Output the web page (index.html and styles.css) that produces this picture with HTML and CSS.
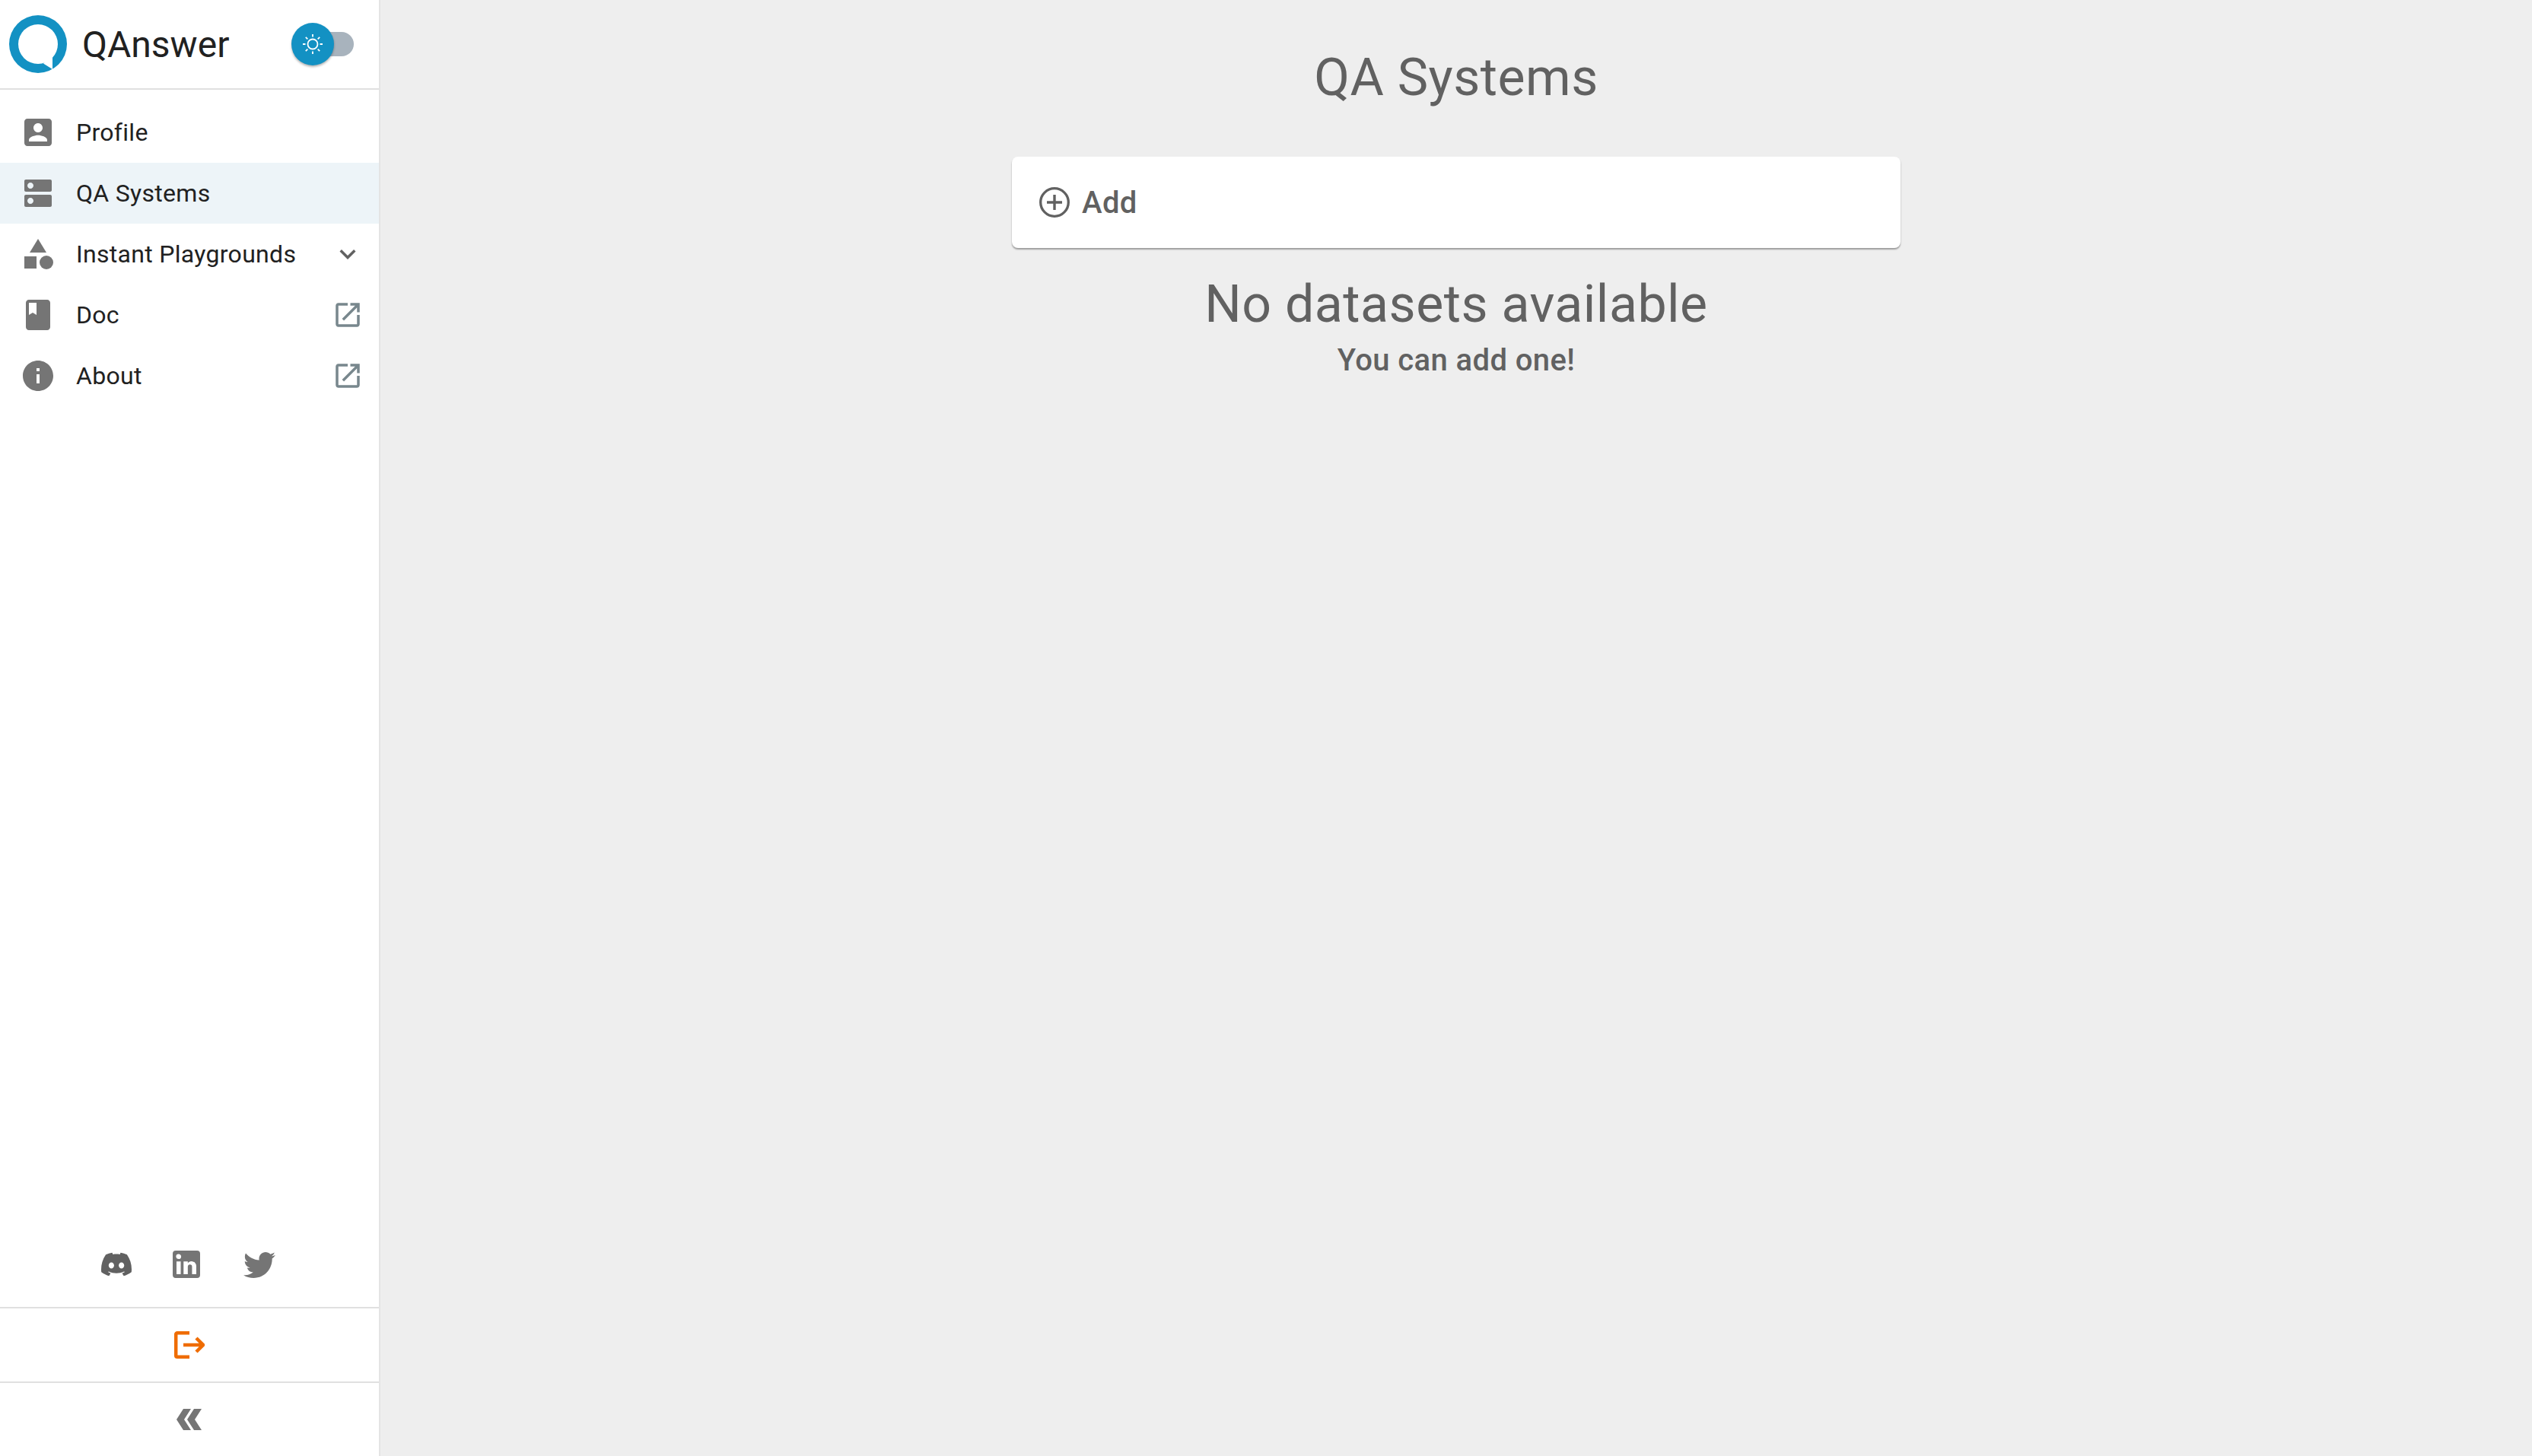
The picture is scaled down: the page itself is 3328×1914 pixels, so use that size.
FILE: index.html
```html
<!DOCTYPE html>
<html>
  <head>
    <title>QAnswer</title>
    <link rel="stylesheet" href="styles.css">
  </head>
  <body>
    <div class="app">
      <aside class="sidebar">
        <div class="brand">
          <svg class="logo" viewBox="0 0 76 76">
            <circle cx="38" cy="38" r="38" fill="#1391c3"/>
            <circle cx="38" cy="38" r="26" fill="#fff"/>
            <polygon points="57,52 57,71 45,63.500" fill="#fff"/>
          </svg>
          <span class="brand-name">QAnswer</span>
          <div class="theme-switch">
            <div class="switch-track"></div>
            <div class="switch-thumb">
              <svg viewBox="0 0 28 28" class="sun">
                <circle cx="14" cy="14" r="6.500" fill="none" stroke="#fff" stroke-width="1.800"/>
                <path d="M14 1v3.500M14 23.500V27M1 14h3.500M23.500 14H27M4.800 4.800l2.500 2.500M20.700 20.700l2.500 2.500M4.800 23.200l2.500-2.500M20.700 7.300l2.500-2.500" stroke="#fff" stroke-width="1.800" fill="none"/>
              </svg>
            </div>
          </div>
        </div>

        <nav class="menu">
          <a class="menu-item">
            <svg class="menu-icon" viewBox="0 0 24 24"><path d="M3 5v14c0 1.100.89 2 2 2h14c1.100 0 2-.9 2-2V5c0-1.100-.9-2-2-2H5c-1.110 0-2 .9-2 2zm12 4c0 1.660-1.340 3-3 3s-3-1.340-3-3 1.340-3 3-3 3 1.340 3 3zm-9 8c0-2 4-3.100 6-3.100s6 1.100 6 3.100v1H6v-1z"/></svg>
            <span class="menu-label">Profile</span>
          </a>
          <a class="menu-item active">
            <svg class="menu-icon" viewBox="0 0 24 24"><path d="M20 13H4c-.55 0-1 .45-1 1v6c0 .55.45 1 1 1h16c.55 0 1-.45 1-1v-6c0-.55-.45-1-1-1zM7 19c-1.100 0-2-.9-2-2s.9-2 2-2 2 .9 2 2-.9 2-2 2zM20 3H4c-.55 0-1 .45-1 1v6c0 .55.45 1 1 1h16c.55 0 1-.45 1-1V4c0-.55-.45-1-1-1zM7 9c-1.100 0-2-.9-2-2s.9-2 2-2 2 .9 2 2-.9 2-2 2z"/></svg>
            <span class="menu-label">QA Systems</span>
          </a>
          <a class="menu-item">
            <svg class="menu-icon" viewBox="0 0 24 24"><path d="M12 2l-5.500 9h11z"/><circle cx="17.500" cy="17.500" r="4.500"/><path d="M3 13.500h8v8H3z"/></svg>
            <span class="menu-label">Instant Playgrounds</span>
            <svg class="menu-end chevron" viewBox="0 0 24 24"><path d="M16.590 8.590L12 13.170 7.410 8.590 6 10l6 6 6-6z"/></svg>
          </a>
          <a class="menu-item">
            <svg class="menu-icon" viewBox="0 0 24 24"><path d="M18 2H6c-1.100 0-2 .9-2 2v16c0 1.100.9 2 2 2h12c1.100 0 2-.9 2-2V4c0-1.100-.9-2-2-2zM6 4h5v8l-2.500-1.500L6 12V4z"/></svg>
            <span class="menu-label">Doc</span>
            <svg class="menu-end" viewBox="0 0 24 24"><path d="M19 19H5V5h7V3H5c-1.110 0-2 .9-2 2v14c0 1.100.89 2 2 2h14c1.100 0 2-.9 2-2v-7h-2v7zM14 3v2h3.590l-9.830 9.830 1.410 1.410L19 6.410V10h2V3h-7z"/></svg>
          </a>
          <a class="menu-item">
            <svg class="menu-icon" viewBox="0 0 24 24"><path d="M12 2C6.480 2 2 6.480 2 12s4.480 10 10 10 10-4.480 10-10S17.520 2 12 2zm1 15h-2v-6h2v6zm0-8h-2V7h2v2z"/></svg>
            <span class="menu-label">About</span>
            <svg class="menu-end" viewBox="0 0 24 24"><path d="M19 19H5V5h7V3H5c-1.110 0-2 .9-2 2v14c0 1.100.89 2 2 2h14c1.100 0 2-.9 2-2v-7h-2v7zM14 3v2h3.590l-9.830 9.830 1.410 1.410L19 6.410V10h2V3h-7z"/></svg>
          </a>
        </nav>

        <div class="socials">
          <svg class="discord" viewBox="0 0 24 24"><path d="M20.317 4.370a19.790 19.790 0 0 0-4.885-1.515.074.074 0 0 0-.079.037c-.211.375-.445.865-.608 1.250-1.845-.276-3.680-.276-5.487 0-.164-.393-.406-.874-.618-1.250a.077.077 0 0 0-.079-.037 19.736 19.736 0 0 0-4.885 1.515.070.070 0 0 0-.032.028C.533 9.046-.319 13.580.099 18.058a.082.082 0 0 0 .031.056c2.053 1.508 4.041 2.423 5.993 3.029a.078.078 0 0 0 .084-.028c.462-.630.873-1.295 1.226-1.994a.076.076 0 0 0-.042-.106c-.653-.248-1.274-.550-1.872-.892a.077.077 0 0 1-.008-.128c.126-.094.252-.192.372-.291a.074.074 0 0 1 .078-.011c3.928 1.793 8.180 1.793 12.061 0a.074.074 0 0 1 .079.010c.120.099.246.198.373.292a.077.077 0 0 1-.007.128 12.299 12.299 0 0 1-1.873.891.077.077 0 0 0-.041.107c.360.698.772 1.363 1.225 1.993a.076.076 0 0 0 .084.029c1.961-.607 3.950-1.522 6.002-3.029a.077.077 0 0 0 .031-.055c.500-5.177-.838-9.674-3.548-13.660a.061.061 0 0 0-.031-.029zM8.020 15.331c-1.183 0-2.157-1.086-2.157-2.419 0-1.333.956-2.419 2.157-2.419 1.211 0 2.176 1.095 2.157 2.419 0 1.333-.956 2.419-2.157 2.419zm7.975 0c-1.183 0-2.157-1.086-2.157-2.419 0-1.333.955-2.419 2.157-2.419 1.211 0 2.176 1.095 2.157 2.419 0 1.333-.946 2.419-2.157 2.419z"/></svg>
          <svg class="social-icon" viewBox="0 0 24 24"><path d="M19 3a2 2 0 0 1 2 2v14a2 2 0 0 1-2 2H5a2 2 0 0 1-2-2V5a2 2 0 0 1 2-2h14m-.5 15.500v-5.300a3.260 3.260 0 0 0-3.260-3.260c-.85 0-1.840.52-2.320 1.300v-1.110h-2.790v8.370h2.790v-4.930c0-.77.62-1.400 1.390-1.400a1.400 1.400 0 0 1 1.400 1.400v4.930h2.790M6.880 8.560a1.680 1.680 0 0 0 1.680-1.680c0-.93-.75-1.690-1.680-1.690a1.690 1.690 0 0 0-1.690 1.690c0 .93.76 1.680 1.690 1.680m1.390 9.940v-8.370H5.500v8.370h2.770z"/></svg>
          <svg class="social-icon" viewBox="0 0 24 24"><path d="M22.460 6c-.77.35-1.600.58-2.460.69.88-.53 1.560-1.370 1.880-2.380-.83.5-1.750.85-2.720 1.050C18.370 4.500 17.260 4 16 4c-2.350 0-4.270 1.920-4.270 4.290 0 .34.04.67.11.98C8.280 9.090 5.110 7.380 3 4.790c-.37.63-.58 1.370-.58 2.150 0 1.490.75 2.810 1.910 3.560-.71 0-1.370-.2-1.950-.5v.03c0 2.080 1.480 3.820 3.440 4.210a4.220 4.220 0 0 1-1.930.07 4.280 4.280 0 0 0 4 2.980 8.521 8.521 0 0 1-5.330 1.840c-.34 0-.68-.02-1.020-.06C3.440 20.290 5.700 21 8.120 21 16 21 20.330 14.460 20.330 8.790c0-.19 0-.37-.01-.56.84-.6 1.560-1.360 2.140-2.230z"/></svg>
        </div>

        <div class="side-row">
          <svg class="logout" viewBox="0 0 40 36">
            <path d="M20 2.300H4a1.800 1.800 0 0 0-1.800 1.800v27.800a1.800 1.800 0 0 0 1.800 1.800h16" fill="none" stroke="#ef6c00" stroke-width="4.500"/>
            <path d="M12 18h25M29 9l9 9-9 9" fill="none" stroke="#ef6c00" stroke-width="4.500"/>
          </svg>
        </div>
        <div class="side-row">
          <svg class="collapse" viewBox="0 0 33 28">
            <polygon points="9,0 19,0 10,14 19,28 9,28 0,14"/>
            <polygon points="23,0 33,0 24,14 33,28 23,28 14,14"/>
          </svg>
        </div>
      </aside>

      <main class="content">
        <h1 class="page-title">QA Systems</h1>
        <div class="add-card">
          <svg class="add-icon" viewBox="0 0 40 40">
            <circle cx="20" cy="20" r="18.300" fill="none" stroke="#616161" stroke-width="3.300"/>
            <path d="M20 10v20M10 20h20" stroke="#616161" stroke-width="3.400" fill="none"/>
          </svg>
          <span class="add-text">Add</span>
        </div>
        <h2 class="empty-title">No datasets available</h2>
        <p class="empty-text">You can add one!</p>
      </main>
    </div>
  </body>
</html>
```

FILE: styles.css
```css
body {
  margin: 0;
  background-color: #eeeeee;
  font-family: "Roboto", sans-serif;
  color: #212121;
}

.app {
  display: flex;
  height: 100vh;
}

.sidebar {
  display: flex;
  flex-direction: column;
  width: 498px;
  flex-shrink: 0;
  background-color: #ffffff;
  border-right: 2px solid #e4e4e4;
}

.brand {
  display: flex;
  align-items: center;
  height: 116px;
  padding-left: 12px;
  border-bottom: 2px solid #e0e0e0;
}

.logo {
  width: 76px;
  height: 76px;
}

.brand-name {
  margin-left: 20px;
  font-size: 48px;
}

.theme-switch {
  position: relative;
  width: 82px;
  height: 56px;
  margin-left: 82px;
}

.switch-track {
  position: absolute;
  top: 12px;
  left: 18px;
  width: 64px;
  height: 32px;
  border-radius: 16px;
  background-color: #a8b3bd;
}

.switch-thumb {
  position: absolute;
  top: 0;
  left: 0;
  display: flex;
  align-items: center;
  justify-content: center;
  width: 56px;
  height: 56px;
  border-radius: 50%;
  background-color: #1391c3;
  box-shadow: 0 2px 3px rgba(0, 0, 0, 0.3);
}

.sun {
  width: 28px;
  height: 28px;
}

.menu {
  display: flex;
  flex-direction: column;
  flex: 1;
  padding-top: 16px;
}

.menu-item {
  display: flex;
  align-items: center;
  height: 80px;
  padding-left: 26px;
  font-size: 32px;
  letter-spacing: 0.3px;
}

.menu-item.active {
  background-color: #edf4f8;
}

.menu-icon {
  width: 48px;
  height: 48px;
  fill: #757575;
}

.menu-label {
  flex: 1;
  margin-left: 26px;
}

.menu-end {
  width: 42px;
  height: 42px;
  margin-right: 20px;
  fill: #78878d;
}

.chevron {
  fill: #616161;
}

.socials {
  display: flex;
  align-items: center;
  justify-content: center;
  gap: 48px;
  box-sizing: border-box;
  height: 96px;
  padding-bottom: 16px;
}

.discord {
  width: 40px;
  height: 40px;
  fill: #616161;
}

.social-icon {
  width: 48px;
  height: 48px;
  fill: #757575;
}

.side-row {
  display: flex;
  align-items: center;
  justify-content: center;
  height: 96px;
  border-top: 2px solid #e0e0e0;
}

.logout {
  width: 40px;
  height: 36px;
}

.collapse {
  width: 33px;
  height: 28px;
  margin-right: 1px;
  fill: #757575;
}

.content {
  display: flex;
  flex-direction: column;
  align-items: center;
  flex: 1;
  color: #616161;
}

.page-title {
  margin: 60px 0 0 0;
  font-size: 68px;
  font-weight: 400;
  line-height: 84px;
  letter-spacing: 0.5px;
}

.add-card {
  display: flex;
  align-items: center;
  width: 1168px;
  height: 120px;
  margin-top: 62px;
  border-radius: 8px;
  background-color: #ffffff;
  box-shadow: 0 2px 2px rgba(0, 0, 0, 0.35);
}

.add-icon {
  width: 40px;
  height: 40px;
  margin-left: 36px;
}

.add-text {
  margin-left: 16px;
  font-size: 40px;
  font-weight: 500;
  letter-spacing: 0.4px;
}

.empty-title {
  margin: 32px 0 0 0;
  font-size: 68px;
  font-weight: 400;
  line-height: 84px;
  letter-spacing: 0.5px;
}

.empty-text {
  margin: 4px 0 0 0;
  font-size: 40px;
  font-weight: 500;
  line-height: 56px;
  letter-spacing: 0.4px;
}
```
